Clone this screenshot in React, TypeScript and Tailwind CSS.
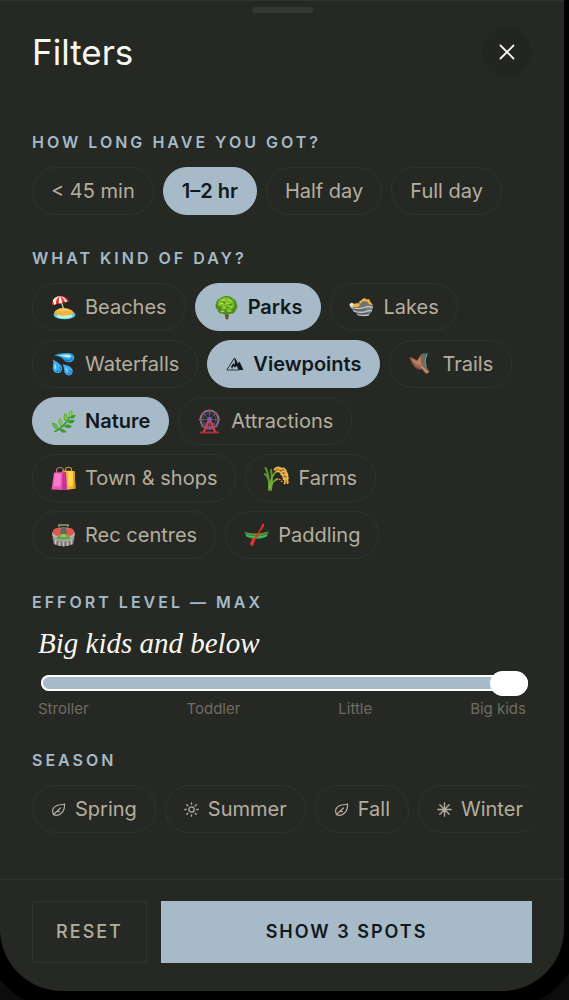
import { useState, type ReactNode } from "react";

const durations = ["< 45 min", "1–2 hr", "Half day", "Full day"];
const effortLevels = ["Stroller", "Toddler", "Little", "Big kids"];

function Glyph({ children }: { children: ReactNode }) {
  return (
    <svg viewBox="0 0 25 25" className="size-[25px] shrink-0" fill="none" aria-hidden="true">
      {children}
    </svg>
  );
}

function BeachIcon() {
  return (
    <Glyph>
      <ellipse cx="13.5" cy="19.8" rx="11" ry="4.4" fill="#56cfd6" />
      <ellipse cx="13.5" cy="21" rx="8" ry="2.4" fill="#b8f3e6" />
      <path d="M3 18c1-3 5-5 9-5 5 0 10 2 11 5-3 3-16 4-20 0Z" fill="#f2b33c" />
      <path d="M6 16.500c3-2.500 10-3 14-.5-4-.7-10-.6-14 .5Z" fill="#ffdc75" />
      <path d="m9.500 4 3.700 12" stroke="#d9d4c9" strokeWidth="1.100" />
      <path d="M1 10C1 5 4 1.500 9 1c4-.2 7.500 2 9 5.500L1 10Z" fill="#e5392c" />
      <path d="M5 9.200C4.500 5.500 6 2.500 9 1c-3.500.3-6 2.200-7.200 4.500L3 9.700l2-.5Z" fill="#f3efe8" />
      <path d="M9 1c2 1 4.300 3 5 6.200l2.300-.5C14.500 3.500 12 1.500 9 1Z" fill="#f3efe8" />
      <path d="M9 1c-1.200 2-1.400 5-.8 7.500l2.600-.6C10.800 5 10.200 3 9 1Z" fill="#fff" />
    </Glyph>
  );
}

function TreeIcon() {
  return (
    <Glyph>
      <path d="m10.500 17 1.200 7.300h2.500L15 17Z" fill="#6c4a22" />
      <path
        d="M12.500 1c3-.3 5 .8 6 2.500 2.500.5 4 2.500 4 5 1.400 2 1 5-.7 6.500-.5 2.700-3 4.200-5.500 3.700-2 1.600-5.500 1.600-7.500.1-2.700.3-4.800-1.500-5.300-4C1.300 13 .9 10.300 2.300 8.300 2.200 5.700 4 4 6 3.500 7.500 1.800 10 .8 12.500 1Z"
        fill="#4e8d1d"
      />
      <path
        d="M12 2c2.500-.3 4.500.7 5 2.500 2.500.4 3.500 2.500 3 4.500 1 2-.2 4.300-2 4.500-1.500 2-4.500 2-6 .5-2.500 1.300-5 .3-5.500-2C4 11.500 3.200 9.500 4 7.800 3.700 5.500 5.500 4 7 4c1-1.500 3-2.200 5-2Z"
        fill="#76b92c"
      />
      <path
        d="M8 5.500c1.300-1.300 3.500-1 4 .5M14 5c1.500-.4 3 .5 3 2M5.500 9.500c.7-1.300 2.500-1.500 3.500-.5M11.500 9c1-1.500 3-1.300 3.700 0M8 13c.5-1.300 2-1.500 3-.5M15 12c1-.9 2.500-.6 3 .5M7 16c1 .8 2 .8 3 0M13.500 15.500c1 1 2.500 1 3.500 0"
        stroke="#b4dc4c"
        strokeWidth="1.100"
        strokeLinecap="round"
      />
      <path
        d="M9.500 7.500c1 .7 2 .5 2.500-.2M15.500 9.500c1 .5 2 .2 2.500-.5M6 12c.8.8 1.800.7 2.500 0M12.500 12.500c.8.7 2 .5 2.400-.3"
        stroke="#376e14"
        strokeWidth=".9"
        strokeLinecap="round"
      />
    </Glyph>
  );
}

function LakeIcon() {
  return (
    <Glyph>
      <path d="m7 12 3-5 5-3.500 5 2.500 4 5-6 4Z" fill="#73746f" />
      <path d="m10 7 5-4 3 1.500 2-.5 1.500 3L24 10l-3.500-.5L18 6.500 14 6l-3 3Z" fill="#efb43d" />
      <path d="M1 9.500 3 7.800l2 1L9 8l2 2-2 2.500-7.500-.2Z" fill="#e8b54b" />
      <path d="m.5 9 2-1.200 2 1.200-1 2.500H1Z" fill="#e9e5d8" />
      <path d="M2 12.500c4 .5 8 1 12-.5 4-1.300 7-1.500 10-.5 0 3-2 7-5 9-5 2-12 .5-17-8Z" fill="#777f83" />
      <path
        d="M2 12.500c5 1.500 9 1.800 14-.3 3-1 5-1 8 0M4 15.500c4 2 9 2.500 13 1 2-.8 4-1 6-.8M8 19.500c4 1.300 8 1.300 12 .3"
        stroke="#c5cacb"
        strokeWidth="1.200"
      />
      <path d="M4 14c4 1.700 9 1.500 13 0M6 17.700c5 1.800 10 1.500 14 0" stroke="#42494b" strokeWidth=".8" />
    </Glyph>
  );
}

function DropletsIcon() {
  return (
    <Glyph>
      <path d="M3 3.500C8 1 16 .5 20 1.500c4 1 4.500 6 1 8-3.500 1.900-7 .2-8.500-2-1.800-2.400-5-3.200-9.500-4Z" fill="#2e9fe4" />
      <path d="M2 7.500c3 2 8 4 9 8 .8 3.500-2 6-5 5.500-3-.4-4.500-3-4.200-6 .2-2.500.7-5 .2-7.500Z" fill="#3caaec" />
      <path d="M11.500 12.500c3 .2 8 1.300 9.700 4.500 1.600 3.300-.4 6.500-3.400 6.500-2.600 0-4.400-2-4.600-4.700-.2-2.300-.5-4.500-1.700-6.300Z" fill="#3caaec" />
      <path d="M7 3.500c4-1 9-1.300 12-.5 1.500.5 1.500 2 0 2.500-3 .8-7-1.200-12-2ZM4 11c.7 2 1.700 3.500 1 6.500-1.500-.5-1.600-3.500-1-6.500ZM14 14.500c1.300 1.500 2.700 3 2.600 6-1.300-1-2-3.500-2.600-6Z" fill="#b7e9fc" />
      <path d="M14.500 8c2 1.200 5 1 6.500-1.500M6 19.500c2 .2 4-1.300 3.500-4M17.500 22c1.800-.2 2.700-1.500 2.300-3.500" stroke="#0f6fc0" strokeWidth="1" strokeLinecap="round" />
    </Glyph>
  );
}

function BootIcon() {
  return (
    <Glyph>
      <path
        d="M1.500 5c3 .5 5.500 2 7.500 3.500L12.500 3l3.500-2 1.500 7c-.5 4 0 7 4 11.500L19.500 22l-2.500-1-2.500-3-4-.5C6 16 4 12 1.500 5Z"
        fill="#98634a"
      />
      <path d="m3 6.500 6 3 3-4.500 1.500 8c-3 1-7-.5-10.500-6.500Z" fill="#b98262" />
      <path d="M16 1.500 20 1l-2.500 7c0 4 .5 7 3.500 10.500-5.500-4-6.500-9-5-17Z" fill="#3b7374" />
      <path d="M18.500 2.500c-1.500 5-2 8.500 0 12" stroke="#73aaa6" strokeWidth="1" />
      <path d="M12.500 14c2 1 4 3.500 7 6.500" stroke="#d1a17e" strokeWidth="1.300" />
      <path d="M2 6c2 6 4.500 9.500 8.500 11l4 .5" stroke="#623c32" strokeWidth="1" />
    </Glyph>
  );
}

function HerbIcon() {
  return (
    <Glyph>
      <path d="M4 22.500c5-2 12-8 16-17" stroke="#38952f" strokeWidth="1.600" strokeLinecap="round" />
      <path d="M19 9c-2.500-3-1.700-6 1.500-8 2 3 1.500 6-1.500 8Z" fill="#71be39" />
      <path d="M15.500 13c-3.500-2-4-5.500-1.500-9 3 2 3.500 5.500 1.500 9Z" fill="#5db23a" />
      <path d="M11 17.500C7.500 16.500 6.500 12.500 8.300 9c3.200 2 4 5 2.700 8.500Z" fill="#64b93d" />
      <path d="M7.500 20.500C4 20.500 1 17.500 1 13.500c4 .5 6.500 3 6.500 7Z" fill="#4ca735" />
      <path d="M19 9c1-2.500 3-3.500 5.500-3.300C24 9 22 10.500 19 9ZM16.500 13c2-2.500 4.500-3 7.500-1.500-1.500 3-4.500 4-7.500 1.500ZM13 17c2.500-2 5.500-2 8 .5-2.700 2.500-6 2.200-8-.5ZM8.500 20.500c3-1 5.500 0 7 2.500-3 1.500-6 .5-7-2.500Z" fill="#3f9b30" />
      <path d="M20 3.500 19.300 7M14.500 6.500l.8 4.500M8.700 11.500l1.800 4M3 15.500l3.500 3.500" stroke="#b2df70" strokeWidth=".8" />
    </Glyph>
  );
}

function FerrisWheelIcon() {
  return (
    <Glyph>
      <circle cx="12.500" cy="10.500" r="9" stroke="#7c7694" strokeWidth="2" />
      <circle cx="12.500" cy="10.500" r="6.500" stroke="#454c78" strokeWidth="1" />
      <path d="M12.500 1.500v18M3.500 10.500h18M6.200 4.200l12.600 12.600M18.800 4.200 6.200 16.800" stroke="#68667e" strokeWidth=".8" />
      <path d="m12.500 10-6 13.500M12.500 10l6 13.500M8.500 18.500h8" stroke="#d53e43" strokeWidth="2.200" />
      <path d="M3 23.500h19" stroke="#a92f3a" strokeWidth="2" />
      <circle cx="12.500" cy="10.500" r="2.400" fill="#8454c0" />
      <g fill="#a44651">
        <circle cx="12.500" cy="1.800" r="1.500" />
        <circle cx="19" cy="4.500" r="1.500" />
        <circle cx="21.800" cy="10.500" r="1.500" />
        <circle cx="3.200" cy="10.500" r="1.500" />
        <circle cx="6" cy="4.500" r="1.500" />
      </g>
      <circle cx="5.500" cy="17" r="1.500" fill="#5258a0" />
      <circle cx="19.500" cy="17" r="1.500" fill="#5258a0" />
      <circle cx="12.500" cy="19.500" r="1.500" fill="#764baf" />
    </Glyph>
  );
}

function BagsIcon() {
  return (
    <Glyph>
      <path d="M14.500 7V3.500c0-3 6-3 6 0V7" stroke="#c99530" strokeWidth="1.100" />
      <path d="m11 4.500 12.500.5 1 17.500-10 1.500Z" fill="#f3b62c" />
      <path d="m17 5 6.500.2.700 14-7 1Z" fill="#ffd54b" />
      <path d="m22 5 1.500.1 1 17.400-2 .3Z" fill="#d69521" />
      <path d="M5.500 8.500V4.500c0-4 7-4 7 0v4" stroke="#ad7b78" strokeWidth="1.200" />
      <path d="m3 6.500 12-.5 1 18-15.500-.5Z" fill="#ee57b7" />
      <path d="m11.500 6.200 3.500-.2 1 18-5-.2Z" fill="#c63396" />
      <path d="m4 7.500 6-.3-.5 13-7 .3Z" fill="#fa79ca" />
    </Glyph>
  );
}

function GrainIcon() {
  return (
    <Glyph>
      <path d="M5 24C5.500 15 5 8 1.500 2M7 24C8.500 15 8 9 7 4M5.500 19C5 13 3 9 .8 8" stroke="#5e9631" strokeWidth="2" strokeLinecap="round" />
      <path d="M6 23c1.500-6 4-9 7.500-10M5 22C7 12 11 4 17 3.500" stroke="#82af3b" strokeWidth="1.400" strokeLinecap="round" />
      <path d="M11 4c6-4 12 3 12.500 13" stroke="#b37524" strokeWidth="2" strokeLinecap="round" />
      <path
        d="M10.500 3.500c1.500-2 4-2.500 6-1.500M16 3c3-1.700 5 0 6 2M18.500 5.500c3-.5 5 1.500 5 4M20 8.500c2 0 4 2 4 4.500M21 12c2 1 3 3 2.500 5.500M13 5.500c3-.5 5.500 1.500 5.500 4M17 8c2 1 3 3 2.500 5.500M19.500 12c1.500 1.500 2 3.500 1 5.500"
        stroke="#efb54b"
        strokeWidth="1.800"
        strokeLinecap="round"
        strokeDasharray="2.500 1"
      />
      <path d="M12 14c2-2 5-.5 6 2" stroke="#d9963a" strokeWidth="1.500" strokeDasharray="2 1" />
    </Glyph>
  );
}

function StadiumIcon() {
  return (
    <Glyph>
      <path d="M8 4V2h9v2" stroke="#7d805f" strokeWidth="2" />
      <path d="M1 11c0-4 5-7 11.500-7S24 7 24 11l-1.500 9C21 24 4 24 2.500 20Z" fill="#77736f" />
      <ellipse cx="12.500" cy="11" rx="11.300" ry="6" fill="#c0b3a9" />
      <ellipse cx="6.700" cy="9" rx="4.800" ry="3.900" fill="#e5574a" />
      <ellipse cx="18.300" cy="9" rx="4.800" ry="3.900" fill="#e5574a" />
      <path d="M10 5h5l1 6h-7Z" fill="#69655c" />
      <path d="M5 15c2-4 13-4 15 0-2 3-13 3-15 0Z" fill="#58ab3e" />
      <path d="m9 14 3.500-3 3.500 3" fill="#83cd51" />
      <path d="M2 13c3 4.500 18 4.500 21 0v3c-3 3.500-18 3.500-21 0Z" fill="#a5a19e" />
      <path d="M4.500 17v4.500M8.500 18.500V23M12.500 18.500v5M16.500 18.500V23M20.500 17v4.500" stroke="#c4bfb9" strokeWidth="1.800" />
    </Glyph>
  );
}

function CanoeIcon() {
  return (
    <Glyph>
      <path d="M.5 8.500c4 2.500 19 2.800 24-.5-.2 5.500-3.500 8-12 8s-11.500-3-12-7.500Z" fill="#1f9140" />
      <path d="M1 9c6 2.500 17 2.500 23-.5-5 5-18 5-23 .5Z" fill="#b66d2e" />
      <path d="M2 12.500c6 2 15 2 21 0" stroke="#4fc05e" strokeWidth="1.500" />
      <path d="M19 2.500 9.500 18.500" stroke="#d3352b" strokeWidth="1.500" />
      <path d="m18.500.5 2 1-2.500 5-1.500-.8ZM11.500 15.500l-3-.5-2.500 5.500 1 2.500 2.500-1Z" fill="#e4322b" />
    </Glyph>
  );
}

function MountainIcon() {
  return (
    <svg viewBox="0 0 18 14" className="h-[14px] w-[18px] shrink-0" aria-hidden="true">
      <path d="M1 12.500 8.500 1l2.500 4" fill="none" stroke="currentColor" strokeWidth=".9" />
      <path d="M8.500 1 12 6.500l1.500-2 4 8.500h-5l-1.500-4-2 1.500-1.500-1.500L6 12l-1-2.500L7.500 6l1.500 2Z" fill="currentColor" />
      <path d="M.5 13H13" stroke="currentColor" strokeWidth=".8" />
    </svg>
  );
}

function LeafIcon() {
  return (
    <svg viewBox="0 0 15 15" className="size-[15px] shrink-0" fill="none" stroke="currentColor" strokeWidth="1.200" strokeLinecap="round" aria-hidden="true">
      <path d="M2.500 12.500C.5 8.500 2 5 6 3.500c2.500-1 5-.5 7.500-1.500.2 4-.5 7-3 9-2 1.800-5.500 3-8 1.500Z" />
      <path d="M2.500 12.500 9.500 6M5.500 9.700l3-.2" />
    </svg>
  );
}

function SunIcon() {
  return (
    <svg viewBox="0 0 15 15" className="size-[15px] shrink-0" fill="none" stroke="currentColor" strokeWidth="1.300" strokeLinecap="round" aria-hidden="true">
      <circle cx="7.500" cy="7.500" r="2.700" />
      <path d="M7.500.8v1.400M7.500 12.800v1.400M.8 7.500h1.400M12.800 7.500h1.400M2.800 2.800l1 1M11.200 11.200l1 1M12.200 2.800l-1 1M3.800 11.200l-1 1" />
    </svg>
  );
}

function AsteriskIcon() {
  return (
    <svg viewBox="0 0 15 15" className="size-[15px] shrink-0" fill="none" stroke="currentColor" strokeWidth="1.300" strokeLinecap="round" aria-hidden="true">
      <path d="M7.500.8v13.400M.8 7.500h13.400M2.800 2.800l9.400 9.400M12.200 2.800l-9.400 9.400" />
    </svg>
  );
}

const kinds = [
  { label: "Beaches", icon: <BeachIcon /> },
  { label: "Parks", icon: <TreeIcon /> },
  { label: "Lakes", icon: <LakeIcon /> },
  { label: "Waterfalls", icon: <DropletsIcon /> },
  { label: "Viewpoints", icon: <MountainIcon /> },
  { label: "Trails", icon: <BootIcon /> },
  { label: "Nature", icon: <HerbIcon /> },
  { label: "Attractions", icon: <FerrisWheelIcon /> },
  { label: "Town & shops", icon: <BagsIcon /> },
  { label: "Farms", icon: <GrainIcon /> },
  { label: "Rec centres", icon: <StadiumIcon /> },
  { label: "Paddling", icon: <CanoeIcon /> },
];

const seasons = [
  { label: "Spring", icon: <LeafIcon /> },
  { label: "Summer", icon: <SunIcon /> },
  { label: "Fall", icon: <LeafIcon /> },
  { label: "Winter", icon: <AsteriskIcon /> },
];

function Chip({
  label,
  icon,
  active,
  onClick,
}: {
  label: string;
  icon?: ReactNode;
  active: boolean;
  onClick: () => void;
}) {
  return (
    <button
      type="button"
      aria-pressed={active}
      onClick={onClick}
      className={`flex h-12 shrink-0 items-center gap-[9px] rounded-full border px-[18px] text-xl leading-6 whitespace-nowrap ${
        active
          ? "border-[#a6bac8] bg-[#a6bac8] font-semibold text-[#11191d]"
          : "border-[#30322e] text-[#b5ae9f]"
      }`}
    >
      {icon}
      {label}
    </button>
  );
}

function Section({ title, children }: { title: string; children: ReactNode }) {
  return (
    <section>
      <h2 className="mb-[13px] text-base leading-6 font-semibold tracking-[3px] text-[#a5bac8] uppercase">
        {title}
      </h2>
      {children}
    </section>
  );
}

function toggle(list: string[], value: string) {
  return list.includes(value) ? list.filter((item) => item !== value) : [...list, value];
}

export default function App() {
  const [duration, setDuration] = useState("1–2 hr");
  const [selectedKinds, setSelectedKinds] = useState(["Parks", "Viewpoints", "Nature"]);
  const [effort, setEffort] = useState(3);
  const [selectedSeasons, setSelectedSeasons] = useState<string[]>([]);

  function reset() {
    setDuration("");
    setSelectedKinds([]);
    setEffort(3);
    setSelectedSeasons([]);
  }

  return (
    <div className="min-h-screen overflow-hidden bg-[#0c0c0c] font-['Inter',sans-serif]">
      {/* device bezel, bleeds past the window edges */}
      <div className="-mr-[13px] -mb-[9px] -ml-[18px] rounded-b-[80px] bg-black px-[18px] pb-[18px]">
        <main className="flex min-h-[calc(100vh-9px)] flex-col rounded-b-[62px] border-t border-[#30332f] bg-[#262824]">
          <div className="mx-auto mt-1.5 h-1.5 w-[61px] rounded-full bg-[#353733]" />

          <header className="mt-3.5 flex items-center justify-between px-8">
            <h1 className="text-[35px] leading-[50px] text-[#f8f8f0]">Filters</h1>
            <button
              type="button"
              aria-label="Close filters"
              className="grid size-[50px] place-items-center rounded-full bg-[#232521] text-[#f8f8f0]"
            >
              <svg viewBox="0 0 16 16" className="size-4" stroke="currentColor" strokeWidth="1.800" strokeLinecap="round" aria-hidden="true">
                <path d="m1.500 1.500 13 13M14.500 1.500l-13 13" />
              </svg>
            </button>
          </header>

          <div className="mt-[53px] flex flex-col gap-[31px] px-8 pb-[46px]">
            <Section title="How long have you got?">
              <div className="flex flex-wrap gap-[9px]">
                {durations.map((item) => (
                  <Chip
                    key={item}
                    label={item}
                    active={duration === item}
                    onClick={() => setDuration(item)}
                  />
                ))}
              </div>
            </Section>

            <Section title="What kind of day?">
              <div className="flex flex-wrap gap-[9px]">
                {kinds.map((kind) => (
                  <Chip
                    key={kind.label}
                    label={kind.label}
                    icon={kind.icon}
                    active={selectedKinds.includes(kind.label)}
                    onClick={() => setSelectedKinds(toggle(selectedKinds, kind.label))}
                  />
                ))}
              </div>
            </Section>

            <Section title="Effort level — max">
              <output
                htmlFor="effort"
                className="block px-1.5 font-['Liberation_Serif',serif] text-[29px] leading-8 text-[#f8f8f0] italic"
              >
                {effortLevels[effort]} and below
              </output>
              <div className="mt-4 pr-1 pl-[9px]">
                <input
                  id="effort"
                  type="range"
                  aria-label="Maximum effort level"
                  min={0}
                  max={3}
                  value={effort}
                  onChange={(event) => setEffort(Number(event.target.value))}
                  className="block h-4 w-full appearance-none rounded-full bg-[#a6bac8] shadow-[inset_0_0_0_2px_white] [&::-webkit-slider-thumb]:h-[25px] [&::-webkit-slider-thumb]:w-[38px] [&::-webkit-slider-thumb]:appearance-none [&::-webkit-slider-thumb]:rounded-full [&::-webkit-slider-thumb]:bg-white"
                />
              </div>
              <div className="mt-2.5 flex justify-between px-1.5 text-[15px] leading-4 text-[#706c61]">
                {effortLevels.map((level) => (
                  <span key={level}>{level}</span>
                ))}
              </div>
            </Section>

            <Section title="Season">
              <div className="flex gap-[9px] overflow-hidden">
                {seasons.map((season) => (
                  <Chip
                    key={season.label}
                    label={season.label}
                    icon={season.icon}
                    active={selectedSeasons.includes(season.label)}
                    onClick={() => setSelectedSeasons(toggle(selectedSeasons, season.label))}
                  />
                ))}
              </div>
            </Section>
          </div>

          <footer className="mt-auto flex gap-3.5 border-t border-[#30332f] px-8 pt-[21px] pb-7 text-lg leading-6 tracking-[2px]">
            <button
              type="button"
              onClick={reset}
              className="h-[62px] w-[115px] border border-[#30332f] font-medium text-[#b5ae9f]"
            >
              RESET
            </button>
            <button type="button" className="h-[62px] flex-1 bg-[#a6bac8] font-semibold text-[#11191d]">
              SHOW 3 SPOTS
            </button>
          </footer>
        </main>
      </div>
    </div>
  );
}
